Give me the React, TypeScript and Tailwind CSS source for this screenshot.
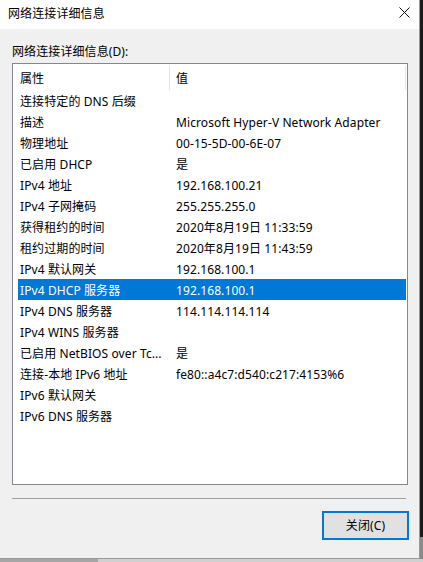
import React from 'react';

const ROWS: [string, string][] = [
  ['连接特定的 DNS 后缀', ''],
  ['描述', 'Microsoft Hyper-V Network Adapter'],
  ['物理地址', '00-15-5D-00-6E-07'],
  ['已启用 DHCP', '是'],
  ['IPv4 地址', '192.168.100.21'],
  ['IPv4 子网掩码', '255.255.255.0'],
  ['获得租约的时间', '2020年8月19日 11:33:59'],
  ['租约过期的时间', '2020年8月19日 11:43:59'],
  ['IPv4 默认网关', '192.168.100.1'],
  ['IPv4 DHCP 服务器', '192.168.100.1'],
  ['IPv4 DNS 服务器', '114.114.114.114'],
  ['IPv4 WINS 服务器', ''],
  ['已启用 NetBIOS over Tc...', '是'],
  ['连接-本地 IPv6 地址', 'fe80::a4c7:d540:c217:4153%6'],
  ['IPv6 默认网关', ''],
  ['IPv6 DNS 服务器', ''],
];

const SELECTED = 9;

export default function App() {
  return (
    <div className="w-[423px] h-[562px] flex flex-col overflow-hidden font-['Noto_Sans','Noto_Sans_CJK_SC',sans-serif] text-[12px] text-black tracking-[0.1px]">
      <div className="flex h-[559px]">
        {/* Window */}
        <div className="w-[420px] flex flex-col border-r border-b border-[#9a9a9a] bg-[#f0f0f0]">
          {/* Title bar */}
          <div className="h-[29px] bg-white flex items-center justify-between pl-[8px] pr-[9px]">
            <span className="leading-[16px] -mt-[1px]">网络连接详细信息</span>
            <svg width="11" height="11" viewBox="0 0 11 11" className="-mt-[4px]">
              <path d="M0.5 0.5L10.5 10.5M10.5 0.5L0.5 10.5" stroke="#111" strokeWidth="1" />
            </svg>
          </div>

          {/* Body */}
          <div className="flex-1 flex flex-col pl-[12px] pt-[13px]">
            <div className="leading-[16px] h-[16px] pt-[2px]">网络连接详细信息(D):</div>

            {/* List view */}
            <div className="mt-[5px] w-[396px] h-[422px] border border-[#828790] bg-white flex flex-col">
              <div className="h-[26px] flex items-center relative pt-[3px]">
                <span className="pl-[7px] w-[163px] leading-[16px]">属性</span>
                <span className="leading-[16px]">值</span>
                <div className="absolute left-[156px] top-[2px] h-[24px] w-px bg-[#e5e5e5]" />
                <div className="absolute left-[392px] top-[2px] h-[24px] w-px bg-[#e5e5e5]" />
              </div>
              {ROWS.map(([name, value], i) => (
                <div
                  key={i}
                  className={`ml-[5px] w-[388px] h-[21px] flex items-center pt-[2px] ${
                    i === SELECTED ? 'bg-[#0078d7] text-white' : ''
                  }`}
                >
                  <span className="w-[158px] pl-[2px] leading-[16px] whitespace-nowrap overflow-hidden">{name}</span>
                  <span className="leading-[16px] whitespace-nowrap">{value}</span>
                </div>
              ))}
            </div>

            {/* Separator */}
            <div className="mt-[13px] w-[394px] h-px bg-[#a0a0a0]" />

            {/* Button */}
            <div className="mt-[12px] flex justify-end pr-[10px]">
              <button className="w-[87px] h-[29px] border-2 border-[#0078d7] bg-[#e1e1e1] flex items-center justify-center leading-[16px] pt-[1px]">
                关闭(C)
              </button>
            </div>
          </div>
        </div>
        {/* Desktop edge */}
        <div className="w-[3px] flex flex-col">
          <div className="flex-1 bg-[#1b1b1b]" />
          <div className="h-[22px] bg-[#8a8a8a]" />
        </div>
      </div>
      <div className="h-[3px] flex">
        <div className="w-[98px] bg-[#a6a6a6]" />
        <div className="flex-1 bg-[#d0d0d0]" />
      </div>
    </div>
  );
}
